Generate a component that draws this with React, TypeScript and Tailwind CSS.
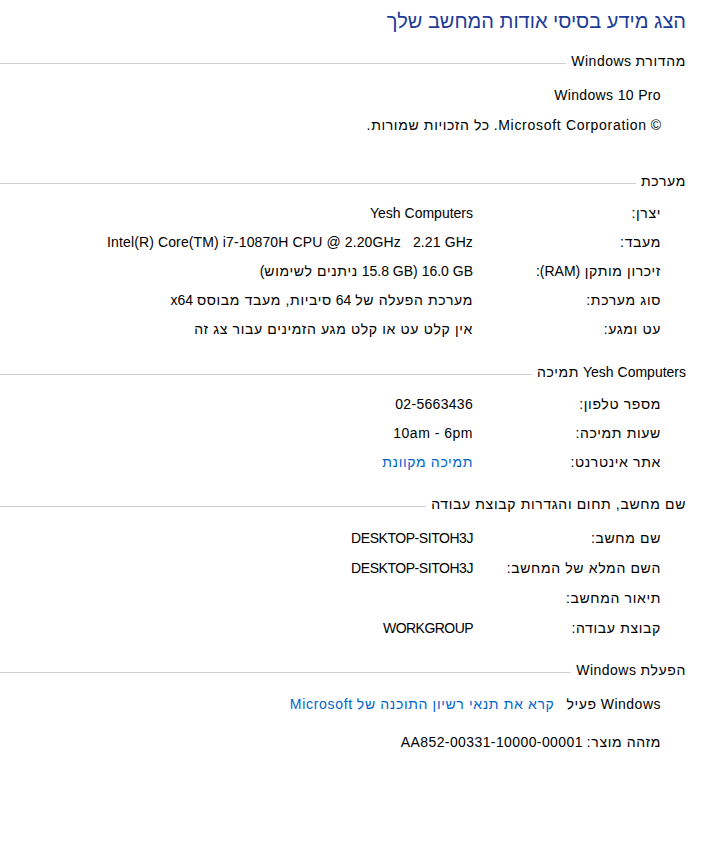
import React from "react";

const font = { fontFamily: '"Liberation Sans", "DejaVu Sans", sans-serif' };

function H({ children }: { children: React.ReactNode }) {
  return <span className="tracking-[0.65px]">{children}</span>;
}

function Header({ children, className = "" }: { children: React.ReactNode; className?: string }) {
  return (
    <div className={`flex h-[20px] items-center pr-[20px] ${className}`}>
      <span className="whitespace-nowrap text-[14px] text-black">{children}</span>
      <div className="mr-[5px] mt-[5px] h-px flex-1 bg-[#cfcfcf]" />
    </div>
  );
}

function Row({ label, value, h = "h-[29px]", link = false }: { label: React.ReactNode; value?: React.ReactNode; h?: string; link?: boolean }) {
  return (
    <div className={`flex ${h} items-center pr-[45px] text-[14px]`}>
      <div className="w-[188px] shrink-0 text-black">{label}</div>
      <div className={link ? "text-[#0066cc]" : "text-black"}>{value}</div>
    </div>
  );
}

export default function App() {
  return (
    <div dir="rtl" className="w-[706px] h-[842px] bg-white" style={font}>
      <div className="flex h-[41px] items-center pr-[20px] text-[20px] text-[#1e3c96]">
        הצג מידע בסיסי אודות המחשב שלך
      </div>

      <Header className="mt-[10px]">
        <H>מהדורת</H> <span className="tracking-[0.5px]">Windows</span>
      </Header>
      <div className="mt-[9px] pr-[45px] text-[14px] text-black">
        <div className="flex h-[30px] items-center tracking-[0.35px]">Windows 10 Pro</div>
        <div className="flex h-[30px] items-center">
          <span>
            © <span className="tracking-[0.7px]">Microsoft Corporation.</span> <H>כל הזכויות שמורות.</H>
          </span>
        </div>
      </div>

      <Header className="mt-[31px]">
        <H>מערכת</H>
      </Header>
      <div className="mt-[8px]">
        <Row label={<H>יצרן:</H>} value="Yesh Computers" />
        <Row
          label={<H>מעבד:</H>}
          value={
            <span dir="ltr" className="tracking-[0.12px]">
              Intel(R) Core(TM) i7-10870H CPU @ 2.20GHz&nbsp;&nbsp; 2.21 GHz
            </span>
          }
        />
        <Row
          label={
            <>
              <H>זיכרון מותקן </H>(RAM):
            </>
          }
          value={
            <>
              <span dir="ltr">16.0 GB</span> (<span dir="ltr">15.8 GB</span> <H>ניתנים לשימוש</H>)
            </>
          }
        />
        <Row
          label={<H>סוג מערכת:</H>}
          value={
            <>
              <H>מערכת הפעלה של</H> 64 <H>סיביות, מעבד מבוסס</H> x64
            </>
          }
        />
        <Row label={<H>עט ומגע:</H>} value={<H>אין קלט עט או קלט מגע הזמינים עבור צג זה</H>} />
      </div>

      <Header className="mt-[18px]">
        Yesh Computers <H>תמיכה</H>
      </Header>
      <div className="mt-[8px]">
        <Row label={<H>מספר טלפון:</H>} value={<span className="tracking-[0.3px]">02-5663436</span>} />
        <Row label={<H>שעות תמיכה:</H>} value={<span className="tracking-[0.5px]">10am - 6pm</span>} />
        <Row label={<H>אתר אינטרנט:</H>} value={<H>תמיכה מקוונת</H>} link />
      </div>

      <Header className="mt-[17px]">
        <H>שם מחשב, תחום והגדרות קבוצת עבודה</H>
      </Header>
      <div className="mt-[9px]">
        <Row h="h-[30px]" label={<H>שם מחשב:</H>} value={<span className="tracking-[-0.45px]">DESKTOP-SITOH3J</span>} />
        <Row
          h="h-[30px]"
          label={<H>השם המלא של המחשב:</H>}
          value={<span className="tracking-[-0.45px]">DESKTOP-SITOH3J</span>}
        />
        <Row h="h-[30px]" label={<H>תיאור המחשב:</H>} value="" />
        <Row h="h-[30px]" label={<H>קבוצת עבודה:</H>} value={<span className="tracking-[-0.55px]">WORKGROUP</span>} />
      </div>

      <Header className="mt-[17px]">
        <H>הפעלת</H> <span className="tracking-[0.5px]">Windows</span>
      </Header>
      <div className="mt-[9px] pr-[45px] text-[14px] text-black">
        <div className="flex h-[30px] items-center gap-[12px]">
          <span>
            <span className="tracking-[0.5px]">Windows</span> <H>פעיל</H>
          </span>
          <span className="text-[#0066cc]">
            <H>קרא את תנאי רשיון התוכנה של</H> <span className="tracking-[0.7px]">Microsoft</span>
          </span>
        </div>
        <div className="mt-[8px] flex h-[30px] items-center">
          <span>
            <H>מזהה מוצר:</H> <span className="tracking-[0.4px]">AA852-00331-10000-00001</span>
          </span>
        </div>
      </div>
    </div>
  );
}
